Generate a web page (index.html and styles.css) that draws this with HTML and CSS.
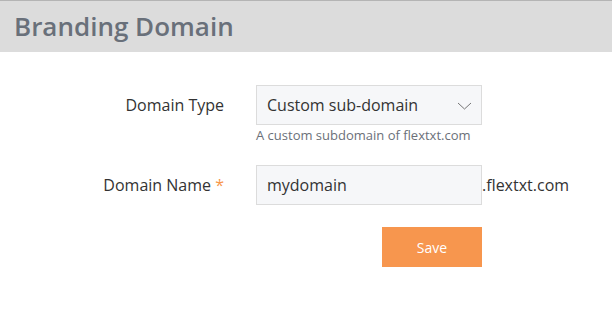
FILE: index.html
```html
<!DOCTYPE html>
<html>
<head>
	<title>Branding Domain</title>
	<link rel="stylesheet" href="styles.css">
</head>
<body>
<div class="panel-head">
	<h1>Branding Domain</h1>
</div>
<form class="brand-form">
	<label class="field-label">Domain Type</label>
	<div class="field">
		<div class="select-box">
			<span>Custom sub-domain</span>
			<svg width="15" height="8" viewBox="0 0 15 8"><polyline points="1,1 7.5,7 14,1" fill="none" stroke="#666" stroke-width="0.9"/></svg>
		</div>
		<div class="help">A custom subdomain of flextxt.com</div>
	</div>

	<label class="field-label">Domain Name <span class="req">*</span></label>
	<div class="field field-inline">
		<input class="text-box" type="text" value="mydomain">
		<span class="suffix">.flextxt.com</span>
	</div>

	<div></div>
	<div class="field actions">
		<button type="button" class="btn-save">Save</button>
	</div>
</form>
</body>
</html>
```

FILE: styles.css
```css
body {margin: 0; font-family: "Open Sans", "Liberation Sans", sans-serif; color: #333; background: #fff;}

.panel-head {height: 51px; border-top: 1px solid #b4b4b4; background-color: #dcdcdc; display: flex; align-items: center; padding-left: 14px;}
.panel-head h1 {margin: 0; font-size: 26px; font-weight: 600; color: #69707a; line-height: 1; padding-bottom: 1px;}

.brand-form {display: grid; grid-template-columns: 224px 1fr; column-gap: 32px; row-gap: 20px; padding-top: 33px;}
.field-label {text-align: right; font-size: 16px; line-height: 40px; color: #333;}
.req {color: #f7964a;}

.field {width: 226px;}
.field-inline {display: flex; align-items: center; width: auto;}

.select-box {box-sizing: border-box; height: 40px; width: 226px; display: flex; align-items: center; justify-content: space-between; padding: 0 9px 0 10px; border: 1px solid #dcdcdc; background-color: #f6f7f9; font-size: 16px;}
.select-box svg {margin-top: 2px;}
.help {font-size: 13px; color: #6b7079; margin-top: 1px; line-height: 19px;}

.text-box {box-sizing: border-box; width: 226px; height: 40px; margin: 0; padding: 0 10px; border: 1px solid #dcdcdc; background-color: #f6f7f9; font-family: "Open Sans", "Liberation Sans", sans-serif; font-size: 16px; color: #333; outline: none;}
.suffix {font-size: 16px; color: #333;}

.actions {display: flex; justify-content: flex-end; padding-top: 2px;}
.btn-save {width: 100px; height: 40px; border: 0; background-color: #f7964e; color: #fff; font-family: "Open Sans", "Liberation Sans", sans-serif; font-size: 14px; cursor: pointer;}
```
